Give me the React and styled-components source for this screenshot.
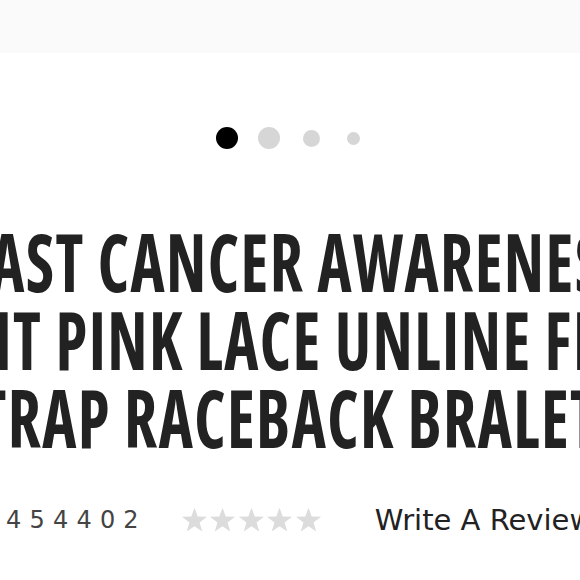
import React from 'react';
import styled, { createGlobalStyle } from 'styled-components';

const Global = createGlobalStyle`
  html, body { margin: 0; padding: 0; background: #fff; overflow: hidden; }
`;

const Page = styled.div`
  width: 580px;
  height: 580px;
  overflow: hidden;
`;

const TopBar = styled.div`
  height: 53px;
  background: #fafafa;
`;

const Pager = styled.div`
  display: flex;
  justify-content: center;
  align-items: center;
  height: 22px;
  margin-top: 74px;
`;

const DotSlot = styled.div`
  width: 42px;
  display: flex;
  justify-content: center;
`;

const Dot = styled.span`
  width: ${p => p.$size}px;
  height: ${p => p.$size}px;
  border-radius: 50%;
  background: ${p => (p.$active ? '#000' : '#d6d6d6')};
`;

const Title = styled.h1`
  margin: 73px 0 0;
  display: flex;
  flex-direction: column;
  align-items: center;
  font-family: "Open Sans", sans-serif;
  font-stretch: 75%;
  font-weight: 680;
  font-size: 81px;
  line-height: 78px;
  letter-spacing: 1.8px;
  color: #222;
`;

const TitleLine = styled.span`
  display: block;
  white-space: nowrap;
  transform: translateX(${p => p.$shift || 0}px) scaleX(0.8);
`;

const Meta = styled.div`
  display: flex;
  align-items: center;
  height: 34px;
  margin-top: 47px;
  padding-left: 6px;
`;

const Sku = styled.span`
  font-family: "DejaVu Sans", sans-serif;
  font-size: 24px;
  letter-spacing: 8.2px;
  color: #444;
`;

const Stars = styled.div`
  display: flex;
  gap: 1.5px;
  margin-left: 34px;
`;

const Review = styled.a`
  margin-left: 53px;
  font-family: "DejaVu Sans", sans-serif;
  font-size: 29px;
  color: #222;
  white-space: nowrap;
  text-decoration: none;
`;

function Star() {
  return (
    <svg width="27" height="26" viewBox="0 0 24 23">
      <polygon
        fill="#dcdcdc"
        points="12,0.5 14.8,8.4 23.2,8.6 16.5,13.7 18.9,21.8 12,17 5.1,21.8 7.5,13.7 0.8,8.6 9.2,8.4"
      />
    </svg>
  );
}

const dots = [
  { size: 22, active: true },
  { size: 22 },
  { size: 17 },
  { size: 13 },
];

const lines = [
  { text: 'BREAST CANCER AWARENESS', shift: -27 },
  { text: 'LIGHT PINK LACE UNLINE FIXED', shift: 0 },
  { text: 'STRAP RACEBACK BRALETTE', shift: 13 },
];

export default function App() {
  return (
    <Page>
      <Global />
      <TopBar />
      <Pager>
        {dots.map((d, i) => (
          <DotSlot key={i}>
            <Dot $size={d.size} $active={d.active} />
          </DotSlot>
        ))}
      </Pager>
      <Title>
        {lines.map(l => (
          <TitleLine key={l.text} $shift={l.shift}>{l.text}</TitleLine>
        ))}
      </Title>
      <Meta>
        <Sku>454402</Sku>
        <Stars>
          {[0, 1, 2, 3, 4].map(i => <Star key={i} />)}
        </Stars>
        <Review href="#">Write A Review</Review>
      </Meta>
    </Page>
  );
}
